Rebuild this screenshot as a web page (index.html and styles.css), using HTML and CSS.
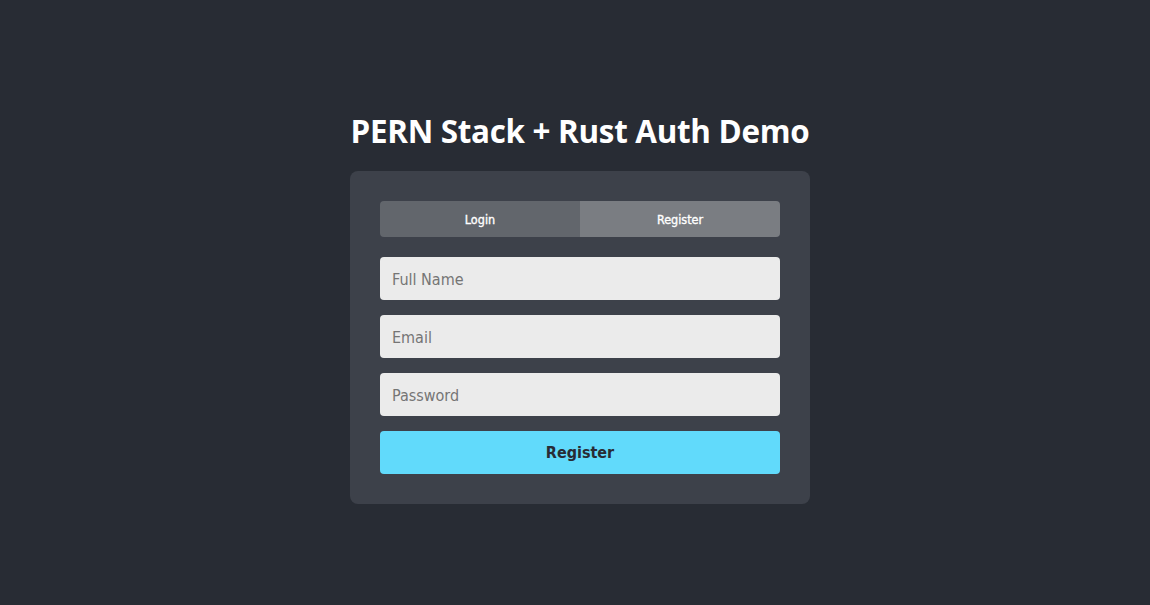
FILE: index.html
```html
<!DOCTYPE html>
<html lang="en">
<head>
<meta charset="utf-8">
<title>PERN Stack + Rust Auth Demo</title>
<link rel="stylesheet" href="styles.css">
</head>
<body>
<main class="page">
  <h1 class="title">PERN Stack + Rust Auth Demo</h1>
  <section class="card">
    <div class="tabs">
      <button class="tab tab-login" type="button">Login</button>
      <button class="tab tab-active" type="button">Register</button>
    </div>
    <form class="form">
      <input class="field" type="text" placeholder="Full Name">
      <input class="field" type="email" placeholder="Email">
      <input class="field" type="password" placeholder="Password">
      <button class="submit" type="button">Register</button>
    </form>
  </section>
</main>
</body>
</html>
```
FILE: styles.css
```css
* { box-sizing: border-box; }
html, body { margin: 0; padding: 0; }
body {
  background: #282c34;
  font-family: "DejaVu Sans Condensed", "DejaVu Sans", sans-serif;
  color: #fff;
}
.page {
  height: 605px;
  display: flex;
  flex-direction: column;
  align-items: center;
  padding: 110px 0 0 10px;
}
.title {
  font-family: "Open Sans", "Noto Sans", sans-serif;
  font-weight: 700;
  font-size: 31.4px;
  line-height: 42px;
  margin: 0 0 19px;
  letter-spacing: -0.3px;
}
.card {
  width: 460px;
  background: #3d414a;
  border-radius: 8px;
  padding: 30px;
}
.tabs {
  display: flex;
  height: 36px;
  border-radius: 4px;
  overflow: hidden;
  margin-bottom: 20px;
}
.tab {
  flex: 1;
  border: 0;
  color: #fff;
  font-family: "DejaVu Sans Condensed", "DejaVu Sans", sans-serif;
  font-size: 12.5px;
  font-weight: 400;
  -webkit-text-stroke: 0.35px #fff;
  padding: 0;
  cursor: pointer;
}
.tab-login { background: #62666c; }
.tab-active { background: #7a7d82; }
.form {
  display: flex;
  flex-direction: column;
  gap: 15px;
}
.field {
  height: 43px;
  border: 0;
  border-radius: 4px;
  background: #ebebeb;
  padding: 1px 12px 0;
  font-family: "DejaVu Sans Condensed", "DejaVu Sans", sans-serif;
  font-size: 16px;
  color: #222;
}
.field::placeholder { color: #757575; }
.submit {
  height: 43px;
  border: 0;
  border-radius: 4px;
  background: #61dafb;
  color: #282c34;
  font-family: "DejaVu Sans Condensed", "DejaVu Sans", sans-serif;
  font-weight: 700;
  font-size: 16px;
  cursor: pointer;
}
```
